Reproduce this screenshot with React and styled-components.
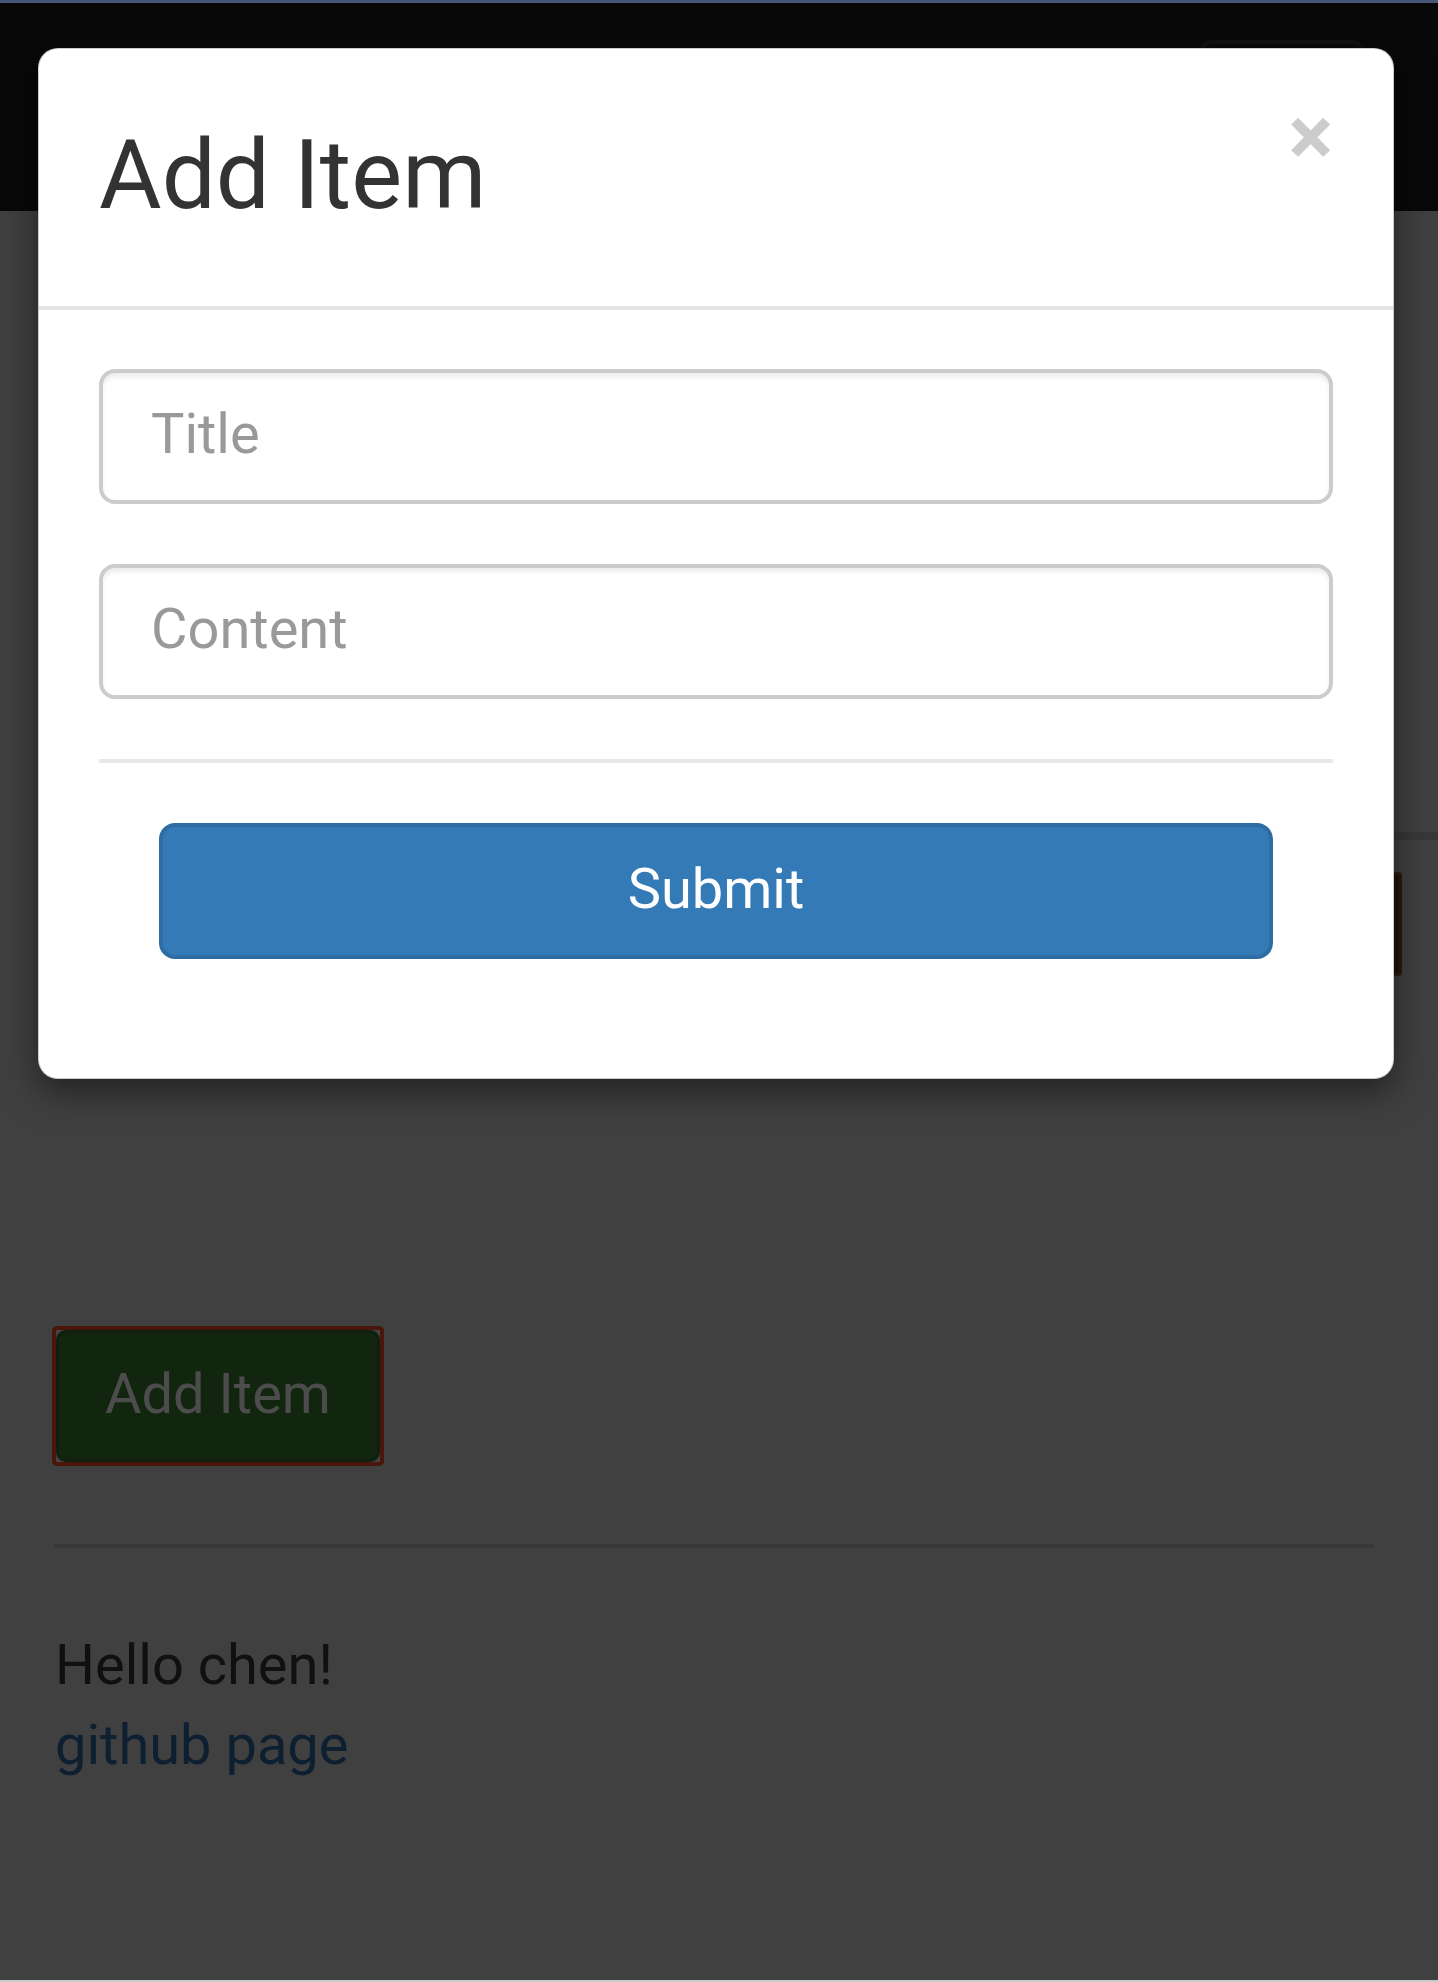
import React from "react";
import styled, { createGlobalStyle } from "styled-components";

export default function App() {
    return (
        <>
            <GlobalStyle />
            <Page>
                <TopStrip />
                <Navbar>
                    <NavToggle />
                </Navbar>

                <Main>
                    <PanelStrip />
                    <ActionRow>
                        <WarnButton />
                    </ActionRow>

                    <Content>
                        <FocusRing>
                            <AddButton>Add Item</AddButton>
                        </FocusRing>
                        <Divider />
                        <Greeting>
                            <div>Hello chen!</div>
                            <Link href="#">github page</Link>
                        </Greeting>
                    </Content>
                </Main>

                <BottomStrip />

                <Modal>
                    <ModalHeader>
                        <ModalTitle>Add Item</ModalTitle>
                        <Close>×</Close>
                    </ModalHeader>
                    <ModalBody>
                        <Field placeholder="Title" />
                        <Field placeholder="Content" />
                        <BodyRule />
                        <SubmitButton>Submit</SubmitButton>
                    </ModalBody>
                </Modal>
            </Page>
        </>
    );
}

const GlobalStyle = createGlobalStyle`
    body {
        margin     : 0;
        background : #404040;
        font-family: Roboto, "Noto Sans", sans-serif;
    }
`;

const Page = styled.div`
    position      : relative;
    height        : 1982px;
    display       : flex;
    flex-direction: column;
    overflow      : hidden;
`;

const TopStrip = styled.div`
    height    : 3px;
    background: #485878;
`;

const Navbar = styled.div`
    height         : 208px;
    background     : #080808;
    display        : flex;
    justify-content: flex-end;
    align-items    : flex-start;
    padding        : 37px 71px 0 0;
    box-sizing     : border-box;
`;

const NavToggle = styled.div`
    width        : 170px;
    height       : 136px;
    border       : 4px solid #101010;
    border-radius: 16px;
    box-sizing   : border-box;
`;

const Main = styled.div`
    flex          : 1;
    display       : flex;
    flex-direction: column;
`;

const PanelStrip = styled.div`
    margin-top : 621px;
    margin-left: 50%;
    height     : 8px;
    background : #383838;
`;

const ActionRow = styled.div`
    display        : flex;
    justify-content: flex-end;
    padding-right  : 36px;
    margin-top     : 32px;
`;

const WarnButton = styled.div`
    width        : 220px;
    height       : 104px;
    background   : #1f150a;
    border       : 3px solid #2a1c0c;
    border-radius: 4px;
    box-sizing   : border-box;
`;

const Content = styled.div`
    display       : flex;
    flex-direction: column;
    align-items   : flex-start;
    padding       : 0 64px 0 52px;
`;

const FocusRing = styled.div`
    margin-top   : 350px;
    display      : inline-flex;
    border       : 4px solid #4a150b;
    border-radius: 5px;
    background   : #454545;
`;

const AddButton = styled.button`
    height       : 132px;
    padding      : 0 46px 5px;
    background   : #12260f;
    border       : 3px solid #0f200d;
    border-radius: 10px;
    color        : #4c4c4c;
    font-family  : Roboto, sans-serif;
    font-size    : 56px;
`;

const Divider = styled.div`
    align-self: stretch;
    margin    : 78px 0 0 2px;
    height    : 4px;
    background: #383838;
`;

const Greeting = styled.div`
    margin-top  : 77px;
    padding-left: 3px;
    font-size   : 56px;
    line-height : 80px;
    color       : #101010;
`;

const Link = styled.a`
    color          : #0d1f30;
    text-decoration: none;
`;

const BottomStrip = styled.div`
    height    : 2px;
    background: #c8cacc;
`;

const Modal = styled.div`
    position     : absolute;
    top          : 48px;
    left         : 38px;
    width        : 1356px;
    box-sizing   : border-box;
    background   : #fff;
    border       : 1px solid rgba(0, 0, 0, 0.2);
    border-radius: 20px;
    box-shadow   : 0 12px 36px rgba(0, 0, 0, 0.5);
`;

const ModalHeader = styled.div`
    display        : flex;
    justify-content: space-between;
    align-items    : flex-start;
    padding        : 60px;
    border-bottom  : 4px solid #e5e5e5;
`;

const ModalTitle = styled.h4`
    margin     : 0;
    padding-bottom: 4px;
    font-size  : 96px;
    font-weight: 400;
    line-height: 133px;
    color      : #333;
`;

const Close = styled.span`
    margin-top : -14px;
    font-size  : 84px;
    font-weight: 700;
    line-height: 1;
    color      : #cccccc;
`;

const ModalBody = styled.div`
    display       : flex;
    flex-direction: column;
    padding       : 59px 60px 119px;
    gap           : 60px;
`;

const Field = styled.input`
    height       : 135px;
    box-sizing   : border-box;
    padding      : 0 48px 6px;
    border       : 4px solid #ccc;
    border-radius: 16px;
    box-shadow   : inset 0 4px 4px rgba(0, 0, 0, 0.075);
    font-family  : Roboto, sans-serif;
    font-size    : 56px;
    color        : #555;
    outline      : none;

    &::placeholder {
        color: #999;
    }
`;

const BodyRule = styled.div`
    height    : 4px;
    background: #e8e8e8;
`;

const SubmitButton = styled.button`
    margin       : 0 60px;
    height       : 136px;
    padding-bottom: 5px;
    background   : #337ab7;
    border       : 4px solid #2e6da4;
    border-radius: 16px;
    color        : #fff;
    font-family  : Roboto, sans-serif;
    font-size    : 56px;
`;
